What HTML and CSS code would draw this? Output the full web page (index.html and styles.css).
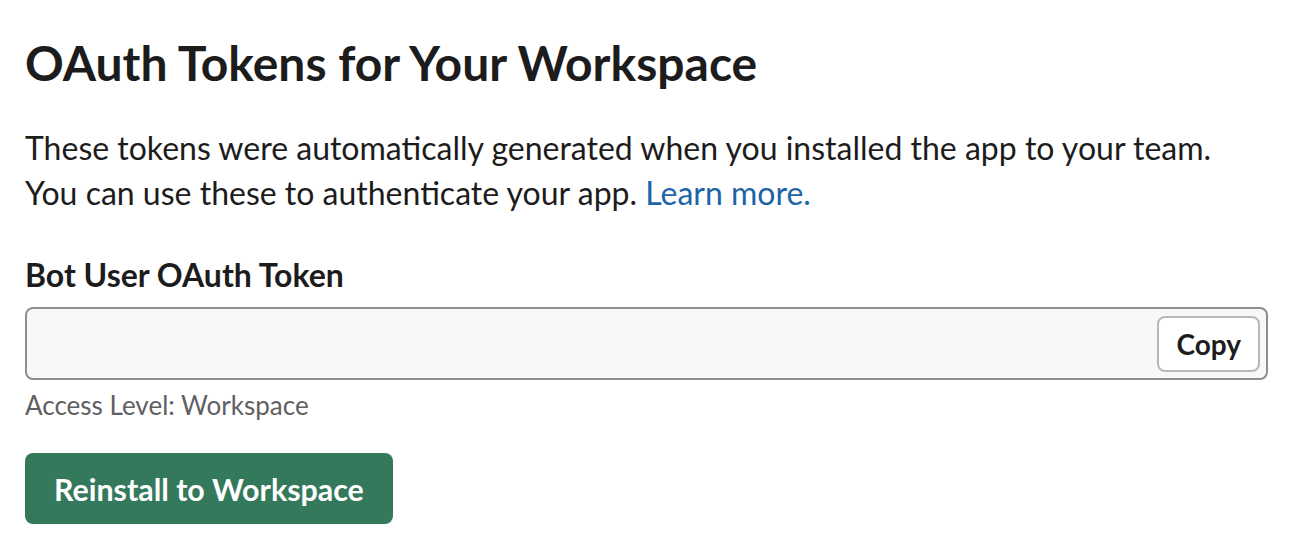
FILE: index.html
```html
<!DOCTYPE html>
<html lang="en">
<head>
    <meta charset="UTF-8">
    <title>OAuth Tokens</title>
    <link rel="stylesheet" href="styles.css">
</head>
<body>
    <div class="section">
        <h2 class="title">OAuth Tokens for Your Workspace</h2>
        <p class="intro">These tokens were automatically generated when you installed the app to your team.<br>
            You can use these to authenticate your app. <a href="#">Learn more.</a></p>
        <div class="field">
            <label class="field-label">Bot User OAuth Token</label>
            <div class="token-box">
                <input class="token-input" type="text" value="" readonly>
                <button class="copy-btn">Copy</button>
            </div>
            <div class="hint">Access Level: Workspace</div>
        </div>
        <button class="primary-btn">Reinstall to Workspace</button>
    </div>
</body>
</html>
```

FILE: styles.css
```css
body {
    margin: 0;
    padding: 0;
    background: #ffffff;
    font-family: Lato, 'Noto Sans', sans-serif;
    color: #1d1c1d;
}
.section {
    padding: 33px 32px 0 25px;
}
.title {
    margin: 0;
    font-size: 48px;
    font-weight: 700;
    line-height: 60px;
}
.intro {
    margin: 32px 0 0;
    font-size: 32px;
    line-height: 45px;
}
.intro a {
    color: #1d64a6;
    text-decoration: none;
}
.field {
    margin-top: 40px;
}
.field-label {
    display: block;
    font-size: 32px;
    font-weight: 700;
    line-height: 40px;
}
.token-box {
    margin-top: 12px;
    display: flex;
    align-items: center;
    height: 73px;
    box-sizing: border-box;
    border: 2px solid #8e8e8e;
    border-radius: 8px;
    background: #f8f8f8;
    padding: 0 6px 0 16px;
}
.token-input {
    flex: 1;
    min-width: 0;
    border: none;
    background: transparent;
    outline: none;
    font-family: inherit;
    font-size: 28px;
}
.copy-btn {
    height: 56px;
    padding: 0 17px;
    border: 2px solid #b8b8b8;
    border-radius: 8px;
    background: #ffffff;
    font-family: inherit;
    font-size: 28px;
    font-weight: 700;
    color: #1d1c1d;
}
.hint {
    margin-top: 10px;
    font-size: 26px;
    line-height: 30px;
    color: #616061;
}
.primary-btn {
    margin-top: 33px;
    height: 71px;
    padding: 0 29px;
    border: none;
    border-radius: 8px;
    background: #35795c;
    color: #ffffff;
    font-family: inherit;
    font-size: 30.4px;
    font-weight: 700;
}
```
